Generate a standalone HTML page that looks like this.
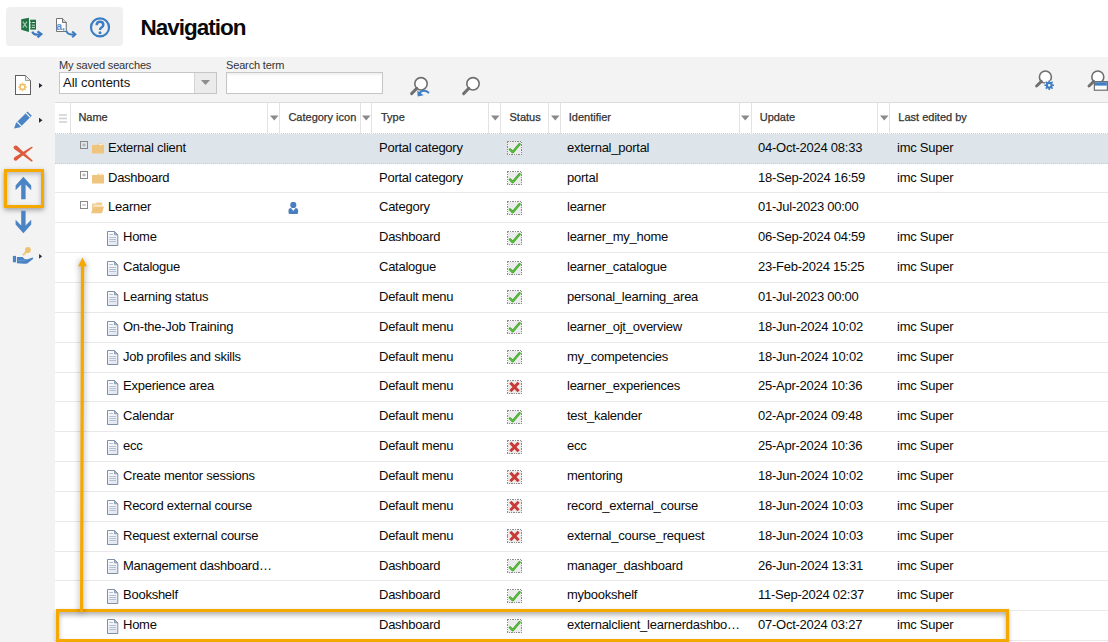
<!DOCTYPE html>
<html><head><meta charset="utf-8">
<style>
*{box-sizing:border-box;margin:0;padding:0}
html,body{width:1108px;height:642px;overflow:hidden;background:#fff;font-family:"Liberation Sans",sans-serif;color:#000}
.abs{position:absolute}
#tbox{position:absolute;left:6px;top:7px;width:117px;height:39px;background:#f0f0f0;border-radius:4px}
#title{position:absolute;left:140.5px;top:14.5px;font-size:22.5px;font-weight:bold;letter-spacing:-1px;color:#0a0a0a;line-height:26px}
#panel{position:absolute;left:0;top:57px;width:1108px;height:585px;background:#f3f3f3}
.lbl{position:absolute;font-size:11px;color:#333;line-height:13px;letter-spacing:-0.15px}
#sel{position:absolute;left:59px;top:72px;width:158px;height:22px;background:#fff;border:1px solid #c6c6c6}
#sel .btn{position:absolute;right:0;top:0;width:22px;height:20px;background:#ebebeb;border-left:1px solid #d4d4d4}
#sel .txt{position:absolute;left:3px;top:2px;font-size:13px;line-height:15px;color:#111}
#inp{position:absolute;left:226px;top:72px;width:157px;height:22px;background:#fff;border:1px solid #c6c6c6;box-shadow:inset 0 2px 2px rgba(0,0,0,0.06)}
#grid{position:absolute;left:55px;top:102px;width:1053px;height:540px;background:#fff;border-top:1px solid #dcdcdc}
#hdr{position:absolute;left:0;top:0;width:1053px;height:31.4px;border-bottom:1px dotted #cfcfcf}
.hs{position:absolute;top:0;width:1px;height:31px;background:#e3e3e3}
.ht{position:absolute;top:8px;font-size:11px;line-height:13px;color:#333;font-weight:normal;-webkit-text-stroke:0.25px #333}
.tri{position:absolute;top:12px}
.row{position:absolute;left:55px;width:1053px;height:29.8px;border-bottom:1px solid #e9e9e9}
.row.sel{background:#dde4ea;border-bottom:1px dotted #c3cbd3;height:30.4px}
.t{position:absolute;top:5.9px;font-size:13px;letter-spacing:-0.25px;line-height:15px;white-space:nowrap;color:#0a0a0a}
.row svg{position:absolute}
.tbx{position:absolute;left:25px;top:7.6px;width:9px;height:9px}
.tbx svg{left:0;top:0}
.fx{position:absolute;left:37px;top:9.1px}
.fx svg{left:0;top:0}
.dx{position:absolute;left:52px;top:7.7px}
.dx svg{left:0;top:0}
.sx{position:absolute;left:452px;top:7.4px}
.sx svg{left:0;top:0}
.px{position:absolute;left:232.5px;top:8.2px}
.px svg{left:0;top:0}
</style></head><body>
<div id="tbox">
 <!-- excel export -->
 <svg class="abs" style="left:14px;top:10px" width="24" height="22" viewBox="0 0 24 22">
  <path d="M1.25 2.3 L8.95 0.85 V15 L1.25 12.8 Z" fill="#1f7243"/>
  <path d="M10.2 2.7 H16 V12.6 H10.2 Z" fill="#1f7243"/>
  <path d="M10.2 5.5 H11 M11.8 5.5 H15 M10.2 8.2 H11 M11.8 8.2 H15 M10.2 10.4 H11 M11.8 10.4 H15" stroke="#d8e8dd" stroke-width="0.9"/>
  <path d="M2.8 4.6 L6.9 10.6 M6.9 4.6 L2.8 10.6" stroke="#9cc7ab" stroke-width="1.3"/>
  <path d="M12.3 14.6 Q13.6 18 17.6 17.5 H19.6" fill="none" stroke="#3b78bf" stroke-width="2.2"/>
  <path d="M17.5 14.3 L21.3 17.1 L17.5 20.4" fill="none" stroke="#3b78bf" stroke-width="2.2"/>
 </svg>
 <!-- text export -->
 <svg class="abs" style="left:49px;top:10px" width="24" height="22" viewBox="0 0 24 22">
  <path d="M1.5 1.5 H7.5 L11.5 5.5 V14.5 H1.5 Z" fill="#fff" stroke="#737373" stroke-width="1"/>
  <path d="M7.5 1.5 V5.5 H11.5" fill="#d0d0d0" stroke="#737373" stroke-width="1"/>
  <path d="M11 6 V14" stroke="#a8a8a8" stroke-width="1"/>
  <text x="1.2" y="12.6" font-family="Liberation Sans" font-size="10.5" font-weight="bold" fill="#5b8fcc">a,</text>
  <path d="M11.4 14 Q12.6 17.6 16.6 17.4 H19" fill="none" stroke="#3d7bc0" stroke-width="2"/>
  <path d="M17.2 14.4 L20.4 17.2 L17.2 20.2" fill="none" stroke="#3d7bc0" stroke-width="2"/>
 </svg>
 <!-- help -->
 <svg class="abs" style="left:83px;top:10px" width="22" height="22" viewBox="0 0 22 22">
  <circle cx="11" cy="10.4" r="9" fill="none" stroke="#3b7ec3" stroke-width="2.2"/>
  <path d="M7.7 8.3 Q7.7 4.8 11 4.8 Q14.3 4.8 14.3 7.8 Q14.3 9.5 12.5 10.5 Q11 11.3 11 13" fill="none" stroke="#3b7ec3" stroke-width="2.5"/>
  <circle cx="11" cy="15.8" r="1.5" fill="#3b7ec3"/>
 </svg>
</div>
<div id="title">Navigation</div>
<div id="panel"></div>

<!-- left side icons -->
<svg class="abs" style="left:13px;top:74px" width="32" height="22" viewBox="0 0 32 22">
 <path d="M2.5 1.5 H12.5 L17.5 6.5 V20.5 H2.5 Z" fill="#fff" stroke="#5e5e5e" stroke-width="1" shape-rendering="crispEdges"/>
 <path d="M12.5 1.5 V6.5 H17.5 Z" fill="#e6e6e6" stroke="#8a8a8a" stroke-width="0.8"/>
 <g transform="translate(9.5,13)" fill="none" stroke="#eec06a">
  <circle r="2.4" stroke-width="1.5"/>
  <path d="M0 -4.2 V-2.6 M0 2.6 V4.2 M-4.2 0 H-2.6 M2.6 0 H4.2 M-3 -3 L-1.9 -1.9 M1.9 1.9 L3 3 M-3 3 L-1.9 1.9 M1.9 -1.9 L3 -3" stroke-width="1.4"/>
 </g>
 <path d="M26 9 L29.5 11.5 L26 14 Z" fill="#1e2a3a"/>
</svg>
<svg class="abs" style="left:13px;top:109px" width="32" height="22" viewBox="0 0 32 22">
 <path d="M1 19.5 L3 14 L14.5 2.5 L18.8 6.8 L7.2 18.3 Z" fill="#4a84c4"/>
 <path d="M4.2 13 L8.5 17.3" stroke="#f3f3f3" stroke-width="1.2"/>
 <path d="M13 4 L17.3 8.3" stroke="#f3f3f3" stroke-width="1.2"/>
 <path d="M26 8.8 L29.5 11.3 L26 13.8 Z" fill="#1e2a3a"/>
</svg>
<svg class="abs" style="left:12px;top:143px" width="23" height="21" viewBox="0 0 23 21"><g fill="#dc5b3d"><path d="M2.33 5.94 L19.29 18.42 L20.31 17.18 L4.87 2.86 Z"/><circle cx="3.60" cy="4.40" r="2.0"/><circle cx="19.80" cy="17.80" r="0.8"/><path d="M4.69 17.36 L20.30 4.97 L19.50 3.83 L2.51 14.24 Z"/><circle cx="3.60" cy="15.80" r="1.9"/><circle cx="19.90" cy="4.40" r="0.7"/></g></svg>
<!-- highlighted up -->
<div class="abs" style="left:4px;top:169px;width:40px;height:39px;border:3px solid #f5a800;box-shadow:0 2px 5px rgba(0,0,0,0.35), inset 0 2px 5px rgba(0,0,0,0.25)"></div>
<svg class="abs" style="left:14px;top:175px" width="20" height="26" viewBox="0 0 20 26">
 <path d="M9.4 1.8 L17.2 10.4 L17.2 15.2 L11.6 9.6 V24.2 H7.2 V9.6 L1.6 15.2 V10.4 Z" fill="#4a84c4"/>
</svg>
<svg class="abs" style="left:14px;top:209px" width="20" height="26" viewBox="0 0 20 26">
 <path d="M9.4 24.2 L17.2 15.6 L17.2 10.8 L11.6 16.4 V1.8 H7.2 V16.4 L1.6 10.8 V15.6 Z" fill="#4a84c4"/>
</svg>
<svg class="abs" style="left:12px;top:245px" width="32" height="22" viewBox="0 0 32 22">
 <rect x="0.9" y="10.9" width="3.1" height="6.4" fill="#4a84c4"/>
 <path d="M4.9 12 H10.6 L12.8 14.2 H15.6 L20.6 12.6 Q21.6 13 21 14 L15.6 18.2 Q14 19 12 18.8 L4.9 18.2 Z" fill="#4a84c4"/>
 <path d="M6 15.6 H12.4" stroke="#6f9fd4" stroke-width="0.8"/>
 <g fill="#eec36f"><circle cx="15.9" cy="5" r="2.9"/><path d="M13.4 6.2 L10.4 9.6 Q10.8 10.8 12 10.6 L15.2 7.4 Z"/></g>
 <path d="M12.6 8.4 L12 9" stroke="#fff3d6" stroke-width="0.7"/>
 <path d="M27.1 9 L30.1 11.35 L27.1 13.7 Z" fill="#1e2a3a"/>
</svg>

<!-- search form -->
<div class="lbl" style="left:59px;top:59px">My saved searches</div>
<div id="sel"><div class="txt">All contents</div><div class="btn"><svg class="abs" style="left:6px;top:7px" width="9" height="6" viewBox="0 0 9 6"><path d="M0 0 H9 L4.5 5 Z" fill="#8d8d8d"/></svg></div></div>
<div class="lbl" style="left:226px;top:59px">Search term</div>
<div id="inp"></div>
<!-- search reset -->
<svg class="abs" style="left:406px;top:73px" width="30" height="26" viewBox="0 0 30 26">
 <circle cx="15" cy="10.8" r="6.2" fill="#fff" stroke="#6f6f6f" stroke-width="1.6"/>
 <path d="M10.8 15.4 L5.6 20.6" stroke="#6f6f6f" stroke-width="2.9" stroke-linecap="round"/>
 <path d="M12.5 22 Q14 17.8 18 17.8 Q20.6 17.8 23 20" fill="none" stroke="#3f7fc4" stroke-width="1.9"/>
 <path d="M11.2 17.4 L11.8 23.4 L17.6 22.2 Z" fill="#3f7fc4"/>
</svg>
<svg class="abs" style="left:456px;top:73px" width="30" height="26" viewBox="0 0 30 26">
 <circle cx="17" cy="10.8" r="6.2" fill="#fff" stroke="#6f6f6f" stroke-width="1.6"/>
 <path d="M12.8 15.4 L7.6 20.6" stroke="#6f6f6f" stroke-width="2.9" stroke-linecap="round"/>
</svg>
<!-- search settings -->
<svg class="abs" style="left:1030px;top:66px" width="30" height="26" viewBox="0 0 30 26">
 <circle cx="15.4" cy="11" r="6" fill="#fff" stroke="#6f6f6f" stroke-width="1.6"/>
 <path d="M11.4 15.4 L6.6 20" stroke="#6f6f6f" stroke-width="2.9" stroke-linecap="round"/>
 <g transform="translate(19.2,19.2)"><circle r="4.7" fill="#f3f3f3"/><circle r="3.4" fill="#3f7fc4"/><path d="M0 -4.8 V4.8 M-4.8 0 H4.8 M-3.4 -3.4 L3.4 3.4 M-3.4 3.4 L3.4 -3.4" stroke="#3f7fc4" stroke-width="1.6"/><circle r="1.2" fill="#fff"/></g>
</svg>
<svg class="abs" style="left:1082px;top:66px" width="26" height="26" viewBox="0 0 26 26">
 <circle cx="15.8" cy="11" r="6" fill="#fff" stroke="#6f6f6f" stroke-width="1.6"/>
 <path d="M11.8 15.4 L7 20" stroke="#6f6f6f" stroke-width="2.9" stroke-linecap="round"/>
 <rect x="12.4" y="15.6" width="13" height="8.6" fill="#fff" stroke="#6f6f6f" stroke-width="1.2"/>
 <rect x="13" y="16.2" width="11.8" height="3.4" fill="#3f7fc4"/>
</svg>

<!-- grid -->
<div id="grid">
 <div id="hdr">
  <svg class="abs" style="left:4px;top:11px" width="8" height="9" viewBox="0 0 8 9"><path d="M0 1 H8 M0 4.5 H8 M0 8 H8" stroke="#cfcfcf" stroke-width="1.4"/></svg>
  <div class="hs" style="left:14.5px"></div>
  <div class="ht" style="left:23.4px">Name</div>
  <div class="hs" style="left:212px"></div><svg class="tri" style="left:215px" width="9" height="6" viewBox="0 0 9 6"><path d="M0 0.5 H8.5 L4.25 5.5 Z" fill="#8a8a8a"/></svg><div class="hs" style="left:224px"></div>
  <div class="ht" style="left:233.4px">Category icon</div>
  <div class="hs" style="left:305px"></div><svg class="tri" style="left:307px" width="9" height="6" viewBox="0 0 9 6"><path d="M0 0.5 H8.5 L4.25 5.5 Z" fill="#8a8a8a"/></svg><div class="hs" style="left:316px"></div>
  <div class="ht" style="left:326px">Type</div>
  <div class="hs" style="left:433px"></div><svg class="tri" style="left:435.5px" width="9" height="6" viewBox="0 0 9 6"><path d="M0 0.5 H8.5 L4.25 5.5 Z" fill="#8a8a8a"/></svg><div class="hs" style="left:445px"></div>
  <div class="ht" style="left:454.5px">Status</div>
  <div class="hs" style="left:493px"></div><svg class="tri" style="left:495.5px" width="9" height="6" viewBox="0 0 9 6"><path d="M0 0.5 H8.5 L4.25 5.5 Z" fill="#8a8a8a"/></svg><div class="hs" style="left:504.5px"></div>
  <div class="ht" style="left:513.8px">Identifier</div>
  <div class="hs" style="left:684px"></div><svg class="tri" style="left:686px" width="9" height="6" viewBox="0 0 9 6"><path d="M0 0.5 H8.5 L4.25 5.5 Z" fill="#8a8a8a"/></svg><div class="hs" style="left:695.5px"></div>
  <div class="ht" style="left:704.7px">Update</div>
  <div class="hs" style="left:822px"></div><svg class="tri" style="left:824.5px" width="9" height="6" viewBox="0 0 9 6"><path d="M0 0.5 H8.5 L4.25 5.5 Z" fill="#8a8a8a"/></svg><div class="hs" style="left:834px"></div>
  <div class="ht" style="left:843.3px">Last edited by</div>
 </div>
</div>
<div id="rows">
<div class="row sel" style="top:133.80px"><span class="tbx"><svg class="tb" width="9" height="9" viewBox="0 0 9 9"><rect x="0.5" y="0.5" width="7" height="7" fill="none" stroke="#8a8a8a"/><path d="M2.4 4 H5.6 M4 2.4 V5.6" stroke="#b4b4b4" stroke-width="1.4"/></svg></span><span class="fx" style=""><svg class="fold" width="12" height="11" viewBox="0 0 12 11"><path d="M0 2 H5 L6 0.8 H11 V2 H12 V10.6 H0 Z" fill="#efc47c"/><path d="M6.5 1.6 H10.6" stroke="#fff" stroke-width="0.8"/></svg></span><span class="t nm" style="left:53px">External client</span><span class="t" style="left:324px">Portal category</span><span class="sx"><svg class="st" width="15" height="14" viewBox="0 0 15 14"><rect x="0.5" y="0.5" width="14" height="13" fill="#ececec" stroke="#8c8c8c" stroke-width="1" stroke-dasharray="1.4 1" shape-rendering="crispEdges"/><path d="M3.1 8.5 L5.7 11.2 L12.5 3.3" fill="none" stroke="#3a9f22" stroke-width="2.5" stroke-linecap="round" stroke-linejoin="round"/><path d="M3.1 8.5 L5.7 11.2 L12.5 3.3" fill="none" stroke="#5cc440" stroke-width="1.1" stroke-linecap="round" stroke-linejoin="round"/></svg></span><span class="t" style="left:512px">external_portal</span><span class="t" style="left:703px">04-Oct-2024 08:33</span><span class="t" style="left:842px">imc Super</span></div>
<div class="row" style="top:163.65px"><span class="tbx"><svg class="tb" width="9" height="9" viewBox="0 0 9 9"><rect x="0.5" y="0.5" width="7" height="7" fill="none" stroke="#8a8a8a"/><path d="M2.4 4 H5.6 M4 2.4 V5.6" stroke="#b4b4b4" stroke-width="1.4"/></svg></span><span class="fx" style=""><svg class="fold" width="12" height="11" viewBox="0 0 12 11"><path d="M0 2 H5 L6 0.8 H11 V2 H12 V10.6 H0 Z" fill="#efc47c"/><path d="M6.5 1.6 H10.6" stroke="#fff" stroke-width="0.8"/></svg></span><span class="t nm" style="left:53px">Dashboard</span><span class="t" style="left:324px">Portal category</span><span class="sx"><svg class="st" width="15" height="14" viewBox="0 0 15 14"><rect x="0.5" y="0.5" width="14" height="13" fill="#ececec" stroke="#8c8c8c" stroke-width="1" stroke-dasharray="1.4 1" shape-rendering="crispEdges"/><path d="M3.1 8.5 L5.7 11.2 L12.5 3.3" fill="none" stroke="#3a9f22" stroke-width="2.5" stroke-linecap="round" stroke-linejoin="round"/><path d="M3.1 8.5 L5.7 11.2 L12.5 3.3" fill="none" stroke="#5cc440" stroke-width="1.1" stroke-linecap="round" stroke-linejoin="round"/></svg></span><span class="t" style="left:512px">portal</span><span class="t" style="left:703px">18-Sep-2024 16:59</span><span class="t" style="left:842px">imc Super</span></div>
<div class="row" style="top:193.50px"><span class="tbx"><svg class="tb" width="9" height="9" viewBox="0 0 9 9"><rect x="0.5" y="0.5" width="7" height="7" fill="none" stroke="#8a8a8a"/><path d="M2.2 4 H5.8" stroke="#b4b4b4" stroke-width="1.2"/></svg></span><span class="fx" style="left:36px;top:8.8px"><svg class="fold" width="13" height="12" viewBox="0 0 13 12"><path d="M1 1.5 H4.6 L5.6 0.5 H11.2 V3.5 H3 L1 11 Z" fill="#f2cf94"/><path d="M2.8 4.4 H13 L11 11.2 H0 Z" fill="#efc47c"/></svg></span><span class="t nm" style="left:53px">Learner</span><span class="px"><svg width="11" height="13" viewBox="0 0 11 13"><circle cx="5.3" cy="2.9" r="3.1" fill="#4a7fbf"/><path d="M0.5 10.4 V8.6 Q0.5 6 3 6 L5.3 9 L7.6 6 Q10.1 6 10.1 8.6 V10.4 Q10.1 11.9 8.6 11.9 H2 Q0.5 11.9 0.5 10.4 Z" fill="#4a7fbf"/></svg></span><span class="t" style="left:324px">Category</span><span class="sx"><svg class="st" width="15" height="14" viewBox="0 0 15 14"><rect x="0.5" y="0.5" width="14" height="13" fill="#ececec" stroke="#8c8c8c" stroke-width="1" stroke-dasharray="1.4 1" shape-rendering="crispEdges"/><path d="M3.1 8.5 L5.7 11.2 L12.5 3.3" fill="none" stroke="#3a9f22" stroke-width="2.5" stroke-linecap="round" stroke-linejoin="round"/><path d="M3.1 8.5 L5.7 11.2 L12.5 3.3" fill="none" stroke="#5cc440" stroke-width="1.1" stroke-linecap="round" stroke-linejoin="round"/></svg></span><span class="t" style="left:512px">learner</span><span class="t" style="left:703px">01-Jul-2023 00:00</span><span class="t" style="left:842px"></span></div>
<div class="row" style="top:223.35px"><span class="dx"><svg class="doc" width="12" height="15" viewBox="0 0 12 15"><defs><linearGradient id="dg" x1="0" y1="0" x2="0.3" y2="1"><stop offset="0" stop-color="#ffffff"/><stop offset="1" stop-color="#e3e8f1"/></linearGradient></defs><path d="M0.5 0.5 H7.5 L10.8 3.8 V14.5 H0.5 Z" fill="url(#dg)" stroke="#7f8ea4"/><path d="M7.5 0.5 V3.8 H10.8 Z" fill="#aab6c8" stroke="#7f8ea4" stroke-width="0.8"/><path d="M2.2 3.5 H6 M2.2 6.5 H9 M2.2 8.5 H9 M2.2 10.5 H9" stroke="#b3bfd2" stroke-width="1"/></svg></span><span class="t nm" style="left:68px">Home</span><span class="t" style="left:324px">Dashboard</span><span class="sx"><svg class="st" width="15" height="14" viewBox="0 0 15 14"><rect x="0.5" y="0.5" width="14" height="13" fill="#ececec" stroke="#8c8c8c" stroke-width="1" stroke-dasharray="1.4 1" shape-rendering="crispEdges"/><path d="M3.1 8.5 L5.7 11.2 L12.5 3.3" fill="none" stroke="#3a9f22" stroke-width="2.5" stroke-linecap="round" stroke-linejoin="round"/><path d="M3.1 8.5 L5.7 11.2 L12.5 3.3" fill="none" stroke="#5cc440" stroke-width="1.1" stroke-linecap="round" stroke-linejoin="round"/></svg></span><span class="t" style="left:512px">learner_my_home</span><span class="t" style="left:703px">06-Sep-2024 04:59</span><span class="t" style="left:842px">imc Super</span></div>
<div class="row" style="top:253.20px"><span class="dx"><svg class="doc" width="12" height="15" viewBox="0 0 12 15"><defs><linearGradient id="dg" x1="0" y1="0" x2="0.3" y2="1"><stop offset="0" stop-color="#ffffff"/><stop offset="1" stop-color="#e3e8f1"/></linearGradient></defs><path d="M0.5 0.5 H7.5 L10.8 3.8 V14.5 H0.5 Z" fill="url(#dg)" stroke="#7f8ea4"/><path d="M7.5 0.5 V3.8 H10.8 Z" fill="#aab6c8" stroke="#7f8ea4" stroke-width="0.8"/><path d="M2.2 3.5 H6 M2.2 6.5 H9 M2.2 8.5 H9 M2.2 10.5 H9" stroke="#b3bfd2" stroke-width="1"/></svg></span><span class="t nm" style="left:68px">Catalogue</span><span class="t" style="left:324px">Catalogue</span><span class="sx"><svg class="st" width="15" height="14" viewBox="0 0 15 14"><rect x="0.5" y="0.5" width="14" height="13" fill="#ececec" stroke="#8c8c8c" stroke-width="1" stroke-dasharray="1.4 1" shape-rendering="crispEdges"/><path d="M3.1 8.5 L5.7 11.2 L12.5 3.3" fill="none" stroke="#3a9f22" stroke-width="2.5" stroke-linecap="round" stroke-linejoin="round"/><path d="M3.1 8.5 L5.7 11.2 L12.5 3.3" fill="none" stroke="#5cc440" stroke-width="1.1" stroke-linecap="round" stroke-linejoin="round"/></svg></span><span class="t" style="left:512px">learner_catalogue</span><span class="t" style="left:703px">23-Feb-2024 15:25</span><span class="t" style="left:842px">imc Super</span></div>
<div class="row" style="top:283.05px"><span class="dx"><svg class="doc" width="12" height="15" viewBox="0 0 12 15"><defs><linearGradient id="dg" x1="0" y1="0" x2="0.3" y2="1"><stop offset="0" stop-color="#ffffff"/><stop offset="1" stop-color="#e3e8f1"/></linearGradient></defs><path d="M0.5 0.5 H7.5 L10.8 3.8 V14.5 H0.5 Z" fill="url(#dg)" stroke="#7f8ea4"/><path d="M7.5 0.5 V3.8 H10.8 Z" fill="#aab6c8" stroke="#7f8ea4" stroke-width="0.8"/><path d="M2.2 3.5 H6 M2.2 6.5 H9 M2.2 8.5 H9 M2.2 10.5 H9" stroke="#b3bfd2" stroke-width="1"/></svg></span><span class="t nm" style="left:68px">Learning status</span><span class="t" style="left:324px">Default menu</span><span class="sx"><svg class="st" width="15" height="14" viewBox="0 0 15 14"><rect x="0.5" y="0.5" width="14" height="13" fill="#ececec" stroke="#8c8c8c" stroke-width="1" stroke-dasharray="1.4 1" shape-rendering="crispEdges"/><path d="M3.1 8.5 L5.7 11.2 L12.5 3.3" fill="none" stroke="#3a9f22" stroke-width="2.5" stroke-linecap="round" stroke-linejoin="round"/><path d="M3.1 8.5 L5.7 11.2 L12.5 3.3" fill="none" stroke="#5cc440" stroke-width="1.1" stroke-linecap="round" stroke-linejoin="round"/></svg></span><span class="t" style="left:512px">personal_learning_area</span><span class="t" style="left:703px">01-Jul-2023 00:00</span><span class="t" style="left:842px"></span></div>
<div class="row" style="top:312.90px"><span class="dx"><svg class="doc" width="12" height="15" viewBox="0 0 12 15"><defs><linearGradient id="dg" x1="0" y1="0" x2="0.3" y2="1"><stop offset="0" stop-color="#ffffff"/><stop offset="1" stop-color="#e3e8f1"/></linearGradient></defs><path d="M0.5 0.5 H7.5 L10.8 3.8 V14.5 H0.5 Z" fill="url(#dg)" stroke="#7f8ea4"/><path d="M7.5 0.5 V3.8 H10.8 Z" fill="#aab6c8" stroke="#7f8ea4" stroke-width="0.8"/><path d="M2.2 3.5 H6 M2.2 6.5 H9 M2.2 8.5 H9 M2.2 10.5 H9" stroke="#b3bfd2" stroke-width="1"/></svg></span><span class="t nm" style="left:68px">On-the-Job Training</span><span class="t" style="left:324px">Default menu</span><span class="sx"><svg class="st" width="15" height="14" viewBox="0 0 15 14"><rect x="0.5" y="0.5" width="14" height="13" fill="#ececec" stroke="#8c8c8c" stroke-width="1" stroke-dasharray="1.4 1" shape-rendering="crispEdges"/><path d="M3.1 8.5 L5.7 11.2 L12.5 3.3" fill="none" stroke="#3a9f22" stroke-width="2.5" stroke-linecap="round" stroke-linejoin="round"/><path d="M3.1 8.5 L5.7 11.2 L12.5 3.3" fill="none" stroke="#5cc440" stroke-width="1.1" stroke-linecap="round" stroke-linejoin="round"/></svg></span><span class="t" style="left:512px">learner_ojt_overview</span><span class="t" style="left:703px">18-Jun-2024 10:02</span><span class="t" style="left:842px">imc Super</span></div>
<div class="row" style="top:342.75px"><span class="dx"><svg class="doc" width="12" height="15" viewBox="0 0 12 15"><defs><linearGradient id="dg" x1="0" y1="0" x2="0.3" y2="1"><stop offset="0" stop-color="#ffffff"/><stop offset="1" stop-color="#e3e8f1"/></linearGradient></defs><path d="M0.5 0.5 H7.5 L10.8 3.8 V14.5 H0.5 Z" fill="url(#dg)" stroke="#7f8ea4"/><path d="M7.5 0.5 V3.8 H10.8 Z" fill="#aab6c8" stroke="#7f8ea4" stroke-width="0.8"/><path d="M2.2 3.5 H6 M2.2 6.5 H9 M2.2 8.5 H9 M2.2 10.5 H9" stroke="#b3bfd2" stroke-width="1"/></svg></span><span class="t nm" style="left:68px">Job profiles and skills</span><span class="t" style="left:324px">Default menu</span><span class="sx"><svg class="st" width="15" height="14" viewBox="0 0 15 14"><rect x="0.5" y="0.5" width="14" height="13" fill="#ececec" stroke="#8c8c8c" stroke-width="1" stroke-dasharray="1.4 1" shape-rendering="crispEdges"/><path d="M3.1 8.5 L5.7 11.2 L12.5 3.3" fill="none" stroke="#3a9f22" stroke-width="2.5" stroke-linecap="round" stroke-linejoin="round"/><path d="M3.1 8.5 L5.7 11.2 L12.5 3.3" fill="none" stroke="#5cc440" stroke-width="1.1" stroke-linecap="round" stroke-linejoin="round"/></svg></span><span class="t" style="left:512px">my_competencies</span><span class="t" style="left:703px">18-Jun-2024 10:02</span><span class="t" style="left:842px">imc Super</span></div>
<div class="row" style="top:372.60px"><span class="dx"><svg class="doc" width="12" height="15" viewBox="0 0 12 15"><defs><linearGradient id="dg" x1="0" y1="0" x2="0.3" y2="1"><stop offset="0" stop-color="#ffffff"/><stop offset="1" stop-color="#e3e8f1"/></linearGradient></defs><path d="M0.5 0.5 H7.5 L10.8 3.8 V14.5 H0.5 Z" fill="url(#dg)" stroke="#7f8ea4"/><path d="M7.5 0.5 V3.8 H10.8 Z" fill="#aab6c8" stroke="#7f8ea4" stroke-width="0.8"/><path d="M2.2 3.5 H6 M2.2 6.5 H9 M2.2 8.5 H9 M2.2 10.5 H9" stroke="#b3bfd2" stroke-width="1"/></svg></span><span class="t nm" style="left:68px">Experience area</span><span class="t" style="left:324px">Default menu</span><span class="sx"><svg class="st" width="15" height="14" viewBox="0 0 15 14"><rect x="0.5" y="0.5" width="14" height="13" fill="#ececec" stroke="#8c8c8c" stroke-width="1" stroke-dasharray="1.4 1" shape-rendering="crispEdges"/><path d="M4.4 3.8 L10.6 10.2 M10.6 3.8 L4.4 10.2" fill="none" stroke="#c93a36" stroke-width="3" stroke-linecap="square"/></svg></span><span class="t" style="left:512px">learner_experiences</span><span class="t" style="left:703px">25-Apr-2024 10:36</span><span class="t" style="left:842px">imc Super</span></div>
<div class="row" style="top:402.45px"><span class="dx"><svg class="doc" width="12" height="15" viewBox="0 0 12 15"><defs><linearGradient id="dg" x1="0" y1="0" x2="0.3" y2="1"><stop offset="0" stop-color="#ffffff"/><stop offset="1" stop-color="#e3e8f1"/></linearGradient></defs><path d="M0.5 0.5 H7.5 L10.8 3.8 V14.5 H0.5 Z" fill="url(#dg)" stroke="#7f8ea4"/><path d="M7.5 0.5 V3.8 H10.8 Z" fill="#aab6c8" stroke="#7f8ea4" stroke-width="0.8"/><path d="M2.2 3.5 H6 M2.2 6.5 H9 M2.2 8.5 H9 M2.2 10.5 H9" stroke="#b3bfd2" stroke-width="1"/></svg></span><span class="t nm" style="left:68px">Calendar</span><span class="t" style="left:324px">Default menu</span><span class="sx"><svg class="st" width="15" height="14" viewBox="0 0 15 14"><rect x="0.5" y="0.5" width="14" height="13" fill="#ececec" stroke="#8c8c8c" stroke-width="1" stroke-dasharray="1.4 1" shape-rendering="crispEdges"/><path d="M3.1 8.5 L5.7 11.2 L12.5 3.3" fill="none" stroke="#3a9f22" stroke-width="2.5" stroke-linecap="round" stroke-linejoin="round"/><path d="M3.1 8.5 L5.7 11.2 L12.5 3.3" fill="none" stroke="#5cc440" stroke-width="1.1" stroke-linecap="round" stroke-linejoin="round"/></svg></span><span class="t" style="left:512px">test_kalender</span><span class="t" style="left:703px">02-Apr-2024 09:48</span><span class="t" style="left:842px">imc Super</span></div>
<div class="row" style="top:432.30px"><span class="dx"><svg class="doc" width="12" height="15" viewBox="0 0 12 15"><defs><linearGradient id="dg" x1="0" y1="0" x2="0.3" y2="1"><stop offset="0" stop-color="#ffffff"/><stop offset="1" stop-color="#e3e8f1"/></linearGradient></defs><path d="M0.5 0.5 H7.5 L10.8 3.8 V14.5 H0.5 Z" fill="url(#dg)" stroke="#7f8ea4"/><path d="M7.5 0.5 V3.8 H10.8 Z" fill="#aab6c8" stroke="#7f8ea4" stroke-width="0.8"/><path d="M2.2 3.5 H6 M2.2 6.5 H9 M2.2 8.5 H9 M2.2 10.5 H9" stroke="#b3bfd2" stroke-width="1"/></svg></span><span class="t nm" style="left:68px">ecc</span><span class="t" style="left:324px">Default menu</span><span class="sx"><svg class="st" width="15" height="14" viewBox="0 0 15 14"><rect x="0.5" y="0.5" width="14" height="13" fill="#ececec" stroke="#8c8c8c" stroke-width="1" stroke-dasharray="1.4 1" shape-rendering="crispEdges"/><path d="M4.4 3.8 L10.6 10.2 M10.6 3.8 L4.4 10.2" fill="none" stroke="#c93a36" stroke-width="3" stroke-linecap="square"/></svg></span><span class="t" style="left:512px">ecc</span><span class="t" style="left:703px">25-Apr-2024 10:36</span><span class="t" style="left:842px">imc Super</span></div>
<div class="row" style="top:462.15px"><span class="dx"><svg class="doc" width="12" height="15" viewBox="0 0 12 15"><defs><linearGradient id="dg" x1="0" y1="0" x2="0.3" y2="1"><stop offset="0" stop-color="#ffffff"/><stop offset="1" stop-color="#e3e8f1"/></linearGradient></defs><path d="M0.5 0.5 H7.5 L10.8 3.8 V14.5 H0.5 Z" fill="url(#dg)" stroke="#7f8ea4"/><path d="M7.5 0.5 V3.8 H10.8 Z" fill="#aab6c8" stroke="#7f8ea4" stroke-width="0.8"/><path d="M2.2 3.5 H6 M2.2 6.5 H9 M2.2 8.5 H9 M2.2 10.5 H9" stroke="#b3bfd2" stroke-width="1"/></svg></span><span class="t nm" style="left:68px">Create mentor sessions</span><span class="t" style="left:324px">Default menu</span><span class="sx"><svg class="st" width="15" height="14" viewBox="0 0 15 14"><rect x="0.5" y="0.5" width="14" height="13" fill="#ececec" stroke="#8c8c8c" stroke-width="1" stroke-dasharray="1.4 1" shape-rendering="crispEdges"/><path d="M4.4 3.8 L10.6 10.2 M10.6 3.8 L4.4 10.2" fill="none" stroke="#c93a36" stroke-width="3" stroke-linecap="square"/></svg></span><span class="t" style="left:512px">mentoring</span><span class="t" style="left:703px">18-Jun-2024 10:02</span><span class="t" style="left:842px">imc Super</span></div>
<div class="row" style="top:492.00px"><span class="dx"><svg class="doc" width="12" height="15" viewBox="0 0 12 15"><defs><linearGradient id="dg" x1="0" y1="0" x2="0.3" y2="1"><stop offset="0" stop-color="#ffffff"/><stop offset="1" stop-color="#e3e8f1"/></linearGradient></defs><path d="M0.5 0.5 H7.5 L10.8 3.8 V14.5 H0.5 Z" fill="url(#dg)" stroke="#7f8ea4"/><path d="M7.5 0.5 V3.8 H10.8 Z" fill="#aab6c8" stroke="#7f8ea4" stroke-width="0.8"/><path d="M2.2 3.5 H6 M2.2 6.5 H9 M2.2 8.5 H9 M2.2 10.5 H9" stroke="#b3bfd2" stroke-width="1"/></svg></span><span class="t nm" style="left:68px">Record external course</span><span class="t" style="left:324px">Default menu</span><span class="sx"><svg class="st" width="15" height="14" viewBox="0 0 15 14"><rect x="0.5" y="0.5" width="14" height="13" fill="#ececec" stroke="#8c8c8c" stroke-width="1" stroke-dasharray="1.4 1" shape-rendering="crispEdges"/><path d="M4.4 3.8 L10.6 10.2 M10.6 3.8 L4.4 10.2" fill="none" stroke="#c93a36" stroke-width="3" stroke-linecap="square"/></svg></span><span class="t" style="left:512px">record_external_course</span><span class="t" style="left:703px">18-Jun-2024 10:03</span><span class="t" style="left:842px">imc Super</span></div>
<div class="row" style="top:521.85px"><span class="dx"><svg class="doc" width="12" height="15" viewBox="0 0 12 15"><defs><linearGradient id="dg" x1="0" y1="0" x2="0.3" y2="1"><stop offset="0" stop-color="#ffffff"/><stop offset="1" stop-color="#e3e8f1"/></linearGradient></defs><path d="M0.5 0.5 H7.5 L10.8 3.8 V14.5 H0.5 Z" fill="url(#dg)" stroke="#7f8ea4"/><path d="M7.5 0.5 V3.8 H10.8 Z" fill="#aab6c8" stroke="#7f8ea4" stroke-width="0.8"/><path d="M2.2 3.5 H6 M2.2 6.5 H9 M2.2 8.5 H9 M2.2 10.5 H9" stroke="#b3bfd2" stroke-width="1"/></svg></span><span class="t nm" style="left:68px">Request external course</span><span class="t" style="left:324px">Default menu</span><span class="sx"><svg class="st" width="15" height="14" viewBox="0 0 15 14"><rect x="0.5" y="0.5" width="14" height="13" fill="#ececec" stroke="#8c8c8c" stroke-width="1" stroke-dasharray="1.4 1" shape-rendering="crispEdges"/><path d="M4.4 3.8 L10.6 10.2 M10.6 3.8 L4.4 10.2" fill="none" stroke="#c93a36" stroke-width="3" stroke-linecap="square"/></svg></span><span class="t" style="left:512px">external_course_request</span><span class="t" style="left:703px">18-Jun-2024 10:03</span><span class="t" style="left:842px">imc Super</span></div>
<div class="row" style="top:551.70px"><span class="dx"><svg class="doc" width="12" height="15" viewBox="0 0 12 15"><defs><linearGradient id="dg" x1="0" y1="0" x2="0.3" y2="1"><stop offset="0" stop-color="#ffffff"/><stop offset="1" stop-color="#e3e8f1"/></linearGradient></defs><path d="M0.5 0.5 H7.5 L10.8 3.8 V14.5 H0.5 Z" fill="url(#dg)" stroke="#7f8ea4"/><path d="M7.5 0.5 V3.8 H10.8 Z" fill="#aab6c8" stroke="#7f8ea4" stroke-width="0.8"/><path d="M2.2 3.5 H6 M2.2 6.5 H9 M2.2 8.5 H9 M2.2 10.5 H9" stroke="#b3bfd2" stroke-width="1"/></svg></span><span class="t nm" style="left:68px">Management dashboard…</span><span class="t" style="left:324px">Dashboard</span><span class="sx"><svg class="st" width="15" height="14" viewBox="0 0 15 14"><rect x="0.5" y="0.5" width="14" height="13" fill="#ececec" stroke="#8c8c8c" stroke-width="1" stroke-dasharray="1.4 1" shape-rendering="crispEdges"/><path d="M3.1 8.5 L5.7 11.2 L12.5 3.3" fill="none" stroke="#3a9f22" stroke-width="2.5" stroke-linecap="round" stroke-linejoin="round"/><path d="M3.1 8.5 L5.7 11.2 L12.5 3.3" fill="none" stroke="#5cc440" stroke-width="1.1" stroke-linecap="round" stroke-linejoin="round"/></svg></span><span class="t" style="left:512px">manager_dashboard</span><span class="t" style="left:703px">26-Jun-2024 13:31</span><span class="t" style="left:842px">imc Super</span></div>
<div class="row" style="top:581.55px"><span class="dx"><svg class="doc" width="12" height="15" viewBox="0 0 12 15"><defs><linearGradient id="dg" x1="0" y1="0" x2="0.3" y2="1"><stop offset="0" stop-color="#ffffff"/><stop offset="1" stop-color="#e3e8f1"/></linearGradient></defs><path d="M0.5 0.5 H7.5 L10.8 3.8 V14.5 H0.5 Z" fill="url(#dg)" stroke="#7f8ea4"/><path d="M7.5 0.5 V3.8 H10.8 Z" fill="#aab6c8" stroke="#7f8ea4" stroke-width="0.8"/><path d="M2.2 3.5 H6 M2.2 6.5 H9 M2.2 8.5 H9 M2.2 10.5 H9" stroke="#b3bfd2" stroke-width="1"/></svg></span><span class="t nm" style="left:68px">Bookshelf</span><span class="t" style="left:324px">Dashboard</span><span class="sx"><svg class="st" width="15" height="14" viewBox="0 0 15 14"><rect x="0.5" y="0.5" width="14" height="13" fill="#ececec" stroke="#8c8c8c" stroke-width="1" stroke-dasharray="1.4 1" shape-rendering="crispEdges"/><path d="M3.1 8.5 L5.7 11.2 L12.5 3.3" fill="none" stroke="#3a9f22" stroke-width="2.5" stroke-linecap="round" stroke-linejoin="round"/><path d="M3.1 8.5 L5.7 11.2 L12.5 3.3" fill="none" stroke="#5cc440" stroke-width="1.1" stroke-linecap="round" stroke-linejoin="round"/></svg></span><span class="t" style="left:512px">mybookshelf</span><span class="t" style="left:703px">11-Sep-2024 02:37</span><span class="t" style="left:842px">imc Super</span></div>
<div class="row" style="top:611.40px"><span class="dx"><svg class="doc" width="12" height="15" viewBox="0 0 12 15"><defs><linearGradient id="dg" x1="0" y1="0" x2="0.3" y2="1"><stop offset="0" stop-color="#ffffff"/><stop offset="1" stop-color="#e3e8f1"/></linearGradient></defs><path d="M0.5 0.5 H7.5 L10.8 3.8 V14.5 H0.5 Z" fill="url(#dg)" stroke="#7f8ea4"/><path d="M7.5 0.5 V3.8 H10.8 Z" fill="#aab6c8" stroke="#7f8ea4" stroke-width="0.8"/><path d="M2.2 3.5 H6 M2.2 6.5 H9 M2.2 8.5 H9 M2.2 10.5 H9" stroke="#b3bfd2" stroke-width="1"/></svg></span><span class="t nm" style="left:68px">Home</span><span class="t" style="left:324px">Dashboard</span><span class="sx"><svg class="st" width="15" height="14" viewBox="0 0 15 14"><rect x="0.5" y="0.5" width="14" height="13" fill="#ececec" stroke="#8c8c8c" stroke-width="1" stroke-dasharray="1.4 1" shape-rendering="crispEdges"/><path d="M3.1 8.5 L5.7 11.2 L12.5 3.3" fill="none" stroke="#3a9f22" stroke-width="2.5" stroke-linecap="round" stroke-linejoin="round"/><path d="M3.1 8.5 L5.7 11.2 L12.5 3.3" fill="none" stroke="#5cc440" stroke-width="1.1" stroke-linecap="round" stroke-linejoin="round"/></svg></span><span class="t" style="left:512px">externalclient_learnerdashbo…</span><span class="t" style="left:703px">07-Oct-2024 03:27</span><span class="t" style="left:842px">imc Super</span></div>
</div>
<!-- orange annotation -->
<div class="abs" style="left:56px;top:609px;width:953px;height:33px;border:3px solid #f5a800;box-shadow:0 2px 4px rgba(0,0,0,0.3), inset 0 3px 5px rgba(0,0,0,0.3)"></div>
<svg class="abs" style="left:70px;top:252px;filter:drop-shadow(0 1px 3px rgba(0,0,0,0.4))" width="26" height="362" viewBox="0 0 26 362">
 <path d="M12.45 5.6 L16.9 14.3 H14.2 L13.1 360 H10.0 L10.9 14.3 H8.1 Z" fill="#f5a800"/>
</svg>
</body></html>
